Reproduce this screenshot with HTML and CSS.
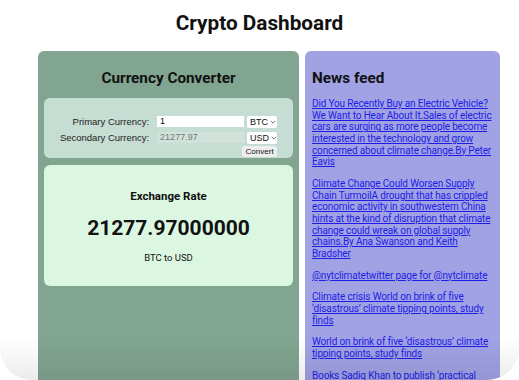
FILE: index.html
```html
<!DOCTYPE html>
<html>
<head>
  <link rel="stylesheet" href="styles.css">
</head>
<body>
  <div class="screen">
    <h1 class="title">Crypto Dashboard</h1>

    <div class="dashboard">
      <!-- Converter side -->
      <div class="converter-panel">
        <h2>Currency Converter</h2>

        <div class="input-box">
          <div class="converter-form">
            <label>Primary Currency:</label>
            <div class="field">1</div>
            <div class="picker">BTC <svg viewBox="0 0 8 5"><path d="M1 1l3 3 3-3"/></svg></div>

            <label>Secondary Currency:</label>
            <div class="field field-disabled">21277.97</div>
            <div class="picker">USD <svg viewBox="0 0 8 5"><path d="M1 1l3 3 3-3"/></svg></div>

            <button class="convert-btn">Convert</button>
          </div>
        </div>

        <div class="rate-box">
          <h3>Exchange Rate</h3>
          <div class="rate-value">21277.97000000</div>
          <p>BTC to USD</p>
        </div>
      </div>

      <!-- News side -->
      <div class="news-panel">
        <h2>News feed</h2>
        <p><a href="#">Did You Recently Buy an Electric Vehicle? We Want to Hear About It.Sales of electric cars are surging as more people become interested in the technology and grow concerned about climate change.By Peter Eavis</a></p>
        <p><a href="#">Climate Change Could Worsen Supply Chain TurmoilA drought that has crippled economic activity in southwestern China hints at the kind of disruption that climate change could wreak on global supply chains.By Ana Swanson and Keith Bradsher</a></p>
        <p><a href="#">@nytclimatetwitter page for @nytclimate</a></p>
        <p><a href="#">Climate crisis World on brink of five ‘disastrous’ climate tipping points, study finds</a></p>
        <p><a href="#">World on brink of five ‘disastrous’ climate tipping points, study finds</a></p>
        <p><a href="#">Books Sadiq Khan to publish ‘practical guide’ to tackling the climate crisis</a></p>
      </div>
    </div>
  </div>
</body>
</html>
```

FILE: styles.css
```css
* {
  box-sizing: border-box;
  margin: 0;
  padding: 0;
}

html, body {
  background: #ffffff;
  overflow: hidden;
}

body {
  font-family: 'Roboto', 'Liberation Sans', sans-serif;
  color: #111;
}

.screen {
  position: relative;
  height: 380px;
  overflow: hidden;
  border-radius: 0 0 32px 32px;
  background: #ffffff;
  padding-top: 11px;
}

/* soft shade at the bottom of the window */
.screen::after {
  content: '';
  position: absolute;
  left: 0;
  right: 0;
  bottom: 0;
  height: 42px;
  background: linear-gradient(to bottom, rgba(0, 0, 0, 0), rgba(0, 0, 0, 0.08));
  pointer-events: none;
}

.title {
  font-size: 20.75px;
  line-height: 24px;
  font-weight: 700;
  text-align: center;
  margin-bottom: 16px;
}

.dashboard {
  display: flex;
  gap: 6px;
  padding-left: 38px;
}

/* Converter */
.converter-panel {
  width: 261px;
  height: 400px;
  background: #81a590;
  border-radius: 6px;
  padding: 18px 6px 0;
}

.converter-panel h2 {
  font-size: 15.3px;
  line-height: 18px;
  font-weight: 700;
  text-align: center;
  margin-bottom: 11px;
}

.input-box {
  background: #c6ddd4;
  border-radius: 6px;
  height: 60px;
  padding-top: 17px;
  display: flex;
  justify-content: center;
}

.converter-form {
  display: grid;
  grid-template-columns: auto 87px 30px;
  column-gap: 3px;
  row-gap: 3px;
  align-items: center;
  font-family: 'Liberation Sans', Arial, sans-serif;
  font-size: 9.5px;
}

.converter-form label {
  text-align: right;
  margin-right: 5px;
  color: #222;
}

.field {
  height: 11px;
  line-height: 11px;
  background: #ffffff;
  padding-left: 3px;
  font-size: 9px;
}

.field-disabled {
  background: #d0e2da;
  color: #777;
}

.picker {
  height: 12px;
  line-height: 12px;
  background: #ffffff;
  border-radius: 2px;
  padding-left: 3px;
  font-size: 9px;
  display: flex;
  align-items: center;
  gap: 2px;
}

.picker svg {
  width: 6px;
  height: 4px;
  fill: none;
  stroke: #444;
  stroke-width: 1;
}

.convert-btn {
  grid-column: 2 / 4;
  justify-self: end;
  width: 35px;
  height: 11px;
  margin-top: -2px;
  border: none;
  background: #eeeeee;
  border-radius: 2px;
  font-family: 'Liberation Sans', Arial, sans-serif;
  font-size: 8px;
  line-height: 11px;
  color: #111;
}

/* Exchange rate */
.rate-box {
  margin-top: 7px;
  height: 121px;
  background: #dcf7e1;
  border-radius: 6px;
  padding-top: 24px;
  text-align: center;
}

.rate-box h3 {
  font-size: 11.5px;
  line-height: 14px;
  font-weight: 700;
}

.rate-value {
  font-size: 21px;
  line-height: 26px;
  font-weight: 700;
  margin-top: 12px;
}

.rate-box p {
  font-size: 9.5px;
  line-height: 12px;
  margin-top: 11px;
}

/* News */
.news-panel {
  width: 195px;
  height: 400px;
  background: #a1a2e4;
  border-radius: 6px;
  padding: 18px 7px 0;
}

.news-panel h2 {
  font-size: 15.3px;
  line-height: 18px;
  font-weight: 700;
  margin-bottom: 11px;
}

.news-panel p {
  font-size: 10px;
  line-height: 11.67px;
  letter-spacing: -0.15px;
  margin-bottom: 10px;
}

.news-panel a {
  color: #1d1de6;
}
```
